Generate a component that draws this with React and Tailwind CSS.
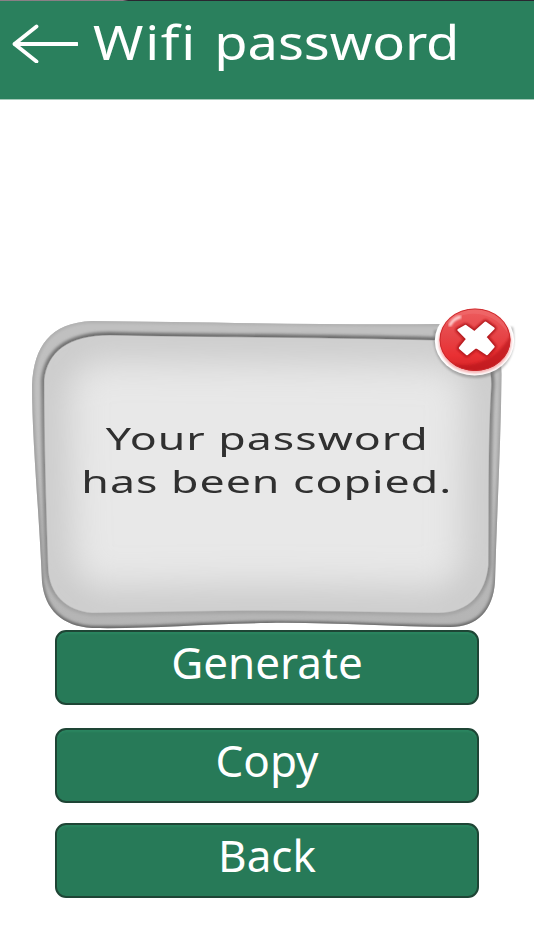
const fontStack = "font-['Noto_Sans','Open_Sans',sans-serif]"

const actions = [
  { label: 'Generate', gap: '' },
  { label: 'Copy', gap: 'mt-[23px]' },
  { label: 'Back', gap: 'mt-5' },
]

const outerPath = 'M32 385C34 346 50 323 92 321C200 322 320 325 440 324C480 325 502 335 501.500 375C501 440 497 510 495 582C493 610 478 627 450 627C390 627 330 622 267 623C200 624 150 629 92 628C62 626 45 610 42 582C39 510 32 440 32 385Z'
const innerPath = 'M44 380C47 352 68 335 110 335C200 337 310 337 434 340C474 341 492 352 491.500 385C488 440 489 500 488.500 565C486 592 470 613 438 613C360 612 280 610 220 611L92 613C66 611 49 594 48 568C46 510 44 440 44 380Z'
const crossPath = 'M458.500 330 465.500 326 474.500 332.500 485.500 322.700 493.500 328.500 485.200 337 493.500 346.800 487 354 476 346.700 467 354 460 348 467.300 339Z'

const BackArrow = () => (
  <svg width="68" height="42" viewBox="0 0 68 42" fill="none" stroke="#fff" strokeLinecap="round" strokeLinejoin="round">
    <path d="M26.500 5.500 4.500 23 26.500 40.500" strokeWidth="3.8" />
    <path d="M5 23H67" strokeWidth="4" />
  </svg>
)

/* Bevelled metal frame behind the message */
const PanelFrame = () => (
  <svg className="absolute inset-0" width="474" height="310" viewBox="30 320 474 310" fill="none">
    <defs>
      <linearGradient id="rim" x1="0" y1="320" x2="0" y2="630" gradientUnits="userSpaceOnUse">
        <stop offset="0" stopColor="#c0c0c0" />
        <stop offset="0.5" stopColor="#c0c0c0" />
        <stop offset="1" stopColor="#b4b4b4" />
      </linearGradient>
      <linearGradient id="bevel" x1="0" y1="335" x2="0" y2="613" gradientUnits="userSpaceOnUse">
        <stop offset="0" stopColor="#6c6c6c" />
        <stop offset="0.25" stopColor="#858585" />
        <stop offset="0.85" stopColor="#909090" />
        <stop offset="1" stopColor="#a6a6a6" />
      </linearGradient>
      <linearGradient id="edge" x1="0" y1="320" x2="0" y2="628" gradientUnits="userSpaceOnUse">
        <stop offset="0" stopColor="#b0b0b0" />
        <stop offset="0.8" stopColor="#8f8f8f" />
        <stop offset="1" stopColor="#606060" />
      </linearGradient>
      <filter id="soft" x="-20%" y="-20%" width="140%" height="140%">
        <feGaussianBlur stdDeviation="1.6" />
      </filter>
      <filter id="haze" x="-30%" y="-30%" width="160%" height="160%">
        <feGaussianBlur stdDeviation="22" />
      </filter>
      <clipPath id="outer"><path d={outerPath} /></clipPath>
      <clipPath id="inner"><path d={innerPath} /></clipPath>
    </defs>
    <g clipPath="url(#outer)">
      <rect x="30" y="320" width="474" height="310" fill="url(#rim)" />
      <path d={outerPath} stroke="url(#edge)" strokeWidth="4" filter="url(#soft)" />
      <path d={innerPath} stroke="url(#bevel)" strokeWidth="6" filter="url(#soft)" />
    </g>
    <g clipPath="url(#inner)">
      <rect x="30" y="320" width="474" height="310" fill="#e8e8e8" />
      <path d={innerPath} stroke="#b8b8b8" strokeWidth="30" filter="url(#haze)" />
    </g>
    <path d={innerPath} stroke="url(#bevel)" strokeWidth="0.8" opacity="0.5" />
  </svg>
)

const CloseIcon = () => (
  <svg width="90" height="76" viewBox="430 304 90 76">
    <defs>
      <linearGradient id="red" x1="0" y1="308" x2="0" y2="371" gradientUnits="userSpaceOnUse">
        <stop offset="0" stopColor="#ee5d5f" />
        <stop offset="0.45" stopColor="#e64447" />
        <stop offset="0.75" stopColor="#e93033" />
        <stop offset="1" stopColor="#d42427" />
      </linearGradient>
      <clipPath id="disc">
        <ellipse cx="475" cy="339.7" rx="35.5" ry="31.3" />
      </clipPath>
      <filter id="glint" x="-20%" y="-20%" width="140%" height="140%">
        <feGaussianBlur stdDeviation="0.8" />
      </filter>
    </defs>
    <path d="M434 330C430 360 451 378 475 378C500 378 519 359 513 327Z" fill="#777" opacity="0.5" filter="url(#glint)" />
    <ellipse cx="474.5" cy="340.8" rx="39.7" ry="34.7" fill="#fff" />
    <ellipse cx="475" cy="342" rx="36.5" ry="31.5" fill="#f5b5b6" filter="url(#glint)" />
    <ellipse cx="475" cy="339.7" rx="35.5" ry="31.3" fill="url(#red)" />
    <g clipPath="url(#disc)">
      <path d="M442 360C470 374 500 357 511 334L514 375H440Z" fill="#b9181c" opacity="0.65" filter="url(#glint)" />
      <path d="M437 335C450 311 488 304 507 332L508 304H437Z" fill="#f49090" opacity="0.22" />
      <ellipse cx="475" cy="339.7" rx="35" ry="30.8" fill="none" stroke="#c9292c" strokeWidth="1" />
    </g>
    <path d="M450 325Q453 319 460 317" stroke="#ffd5d5" strokeWidth="3" strokeLinecap="round" fill="none" filter="url(#glint)" />
    <path d={crossPath} fill="#b4191c" stroke="#b4191c" strokeWidth="6" strokeLinejoin="round" filter="url(#glint)" />
    <path d={crossPath} fill="#fff" stroke="#fff" strokeWidth="2.4" strokeLinejoin="round" />
  </svg>
)

const MessagePanel = () => (
  <section className="relative ml-[30px] mt-[220px] h-[310px] w-[474px]">
    <PanelFrame />
    <div className="relative flex flex-col items-center pt-[97px] text-[31px] leading-[43px] tracking-[0.7px] text-[#303030]">
      <p className="origin-center scale-x-[1.44] whitespace-nowrap">Your password</p>
      <p className="origin-center scale-x-[1.44] whitespace-nowrap">has been copied.</p>
    </div>
    <button aria-label="Close" className="absolute -top-4 left-[400px]">
      <CloseIcon />
    </button>
  </section>
)

const App = () => (
  <div className={`h-[950px] w-[534px] overflow-hidden bg-white ${fontStack}`}>
    <header className="h-[100px] border-b border-[#a5cab9] bg-[#2a805d]">
      <div className="h-px bg-linear-to-r from-[#8b7f86] from-[23%] to-[#292630] to-[24%]" />
      <div className="flex items-start">
        <button aria-label="Back" className="ml-[10px] mt-[20px]">
          <BackArrow />
        </button>
        <h1 className="ml-[15px] mt-[8px] origin-left scale-x-[1.13] whitespace-nowrap text-[48px] font-[450] leading-[66px] text-white">
          <span className="tracking-[1.5px]">Wifi</span> <span className="ml-[3px] tracking-[-0.1px]">password</span>
        </h1>
      </div>
    </header>

    <MessagePanel />

    <nav className="flex flex-col px-[55px]">
      {actions.map(({ label, gap }) => (
        <button
          key={label}
          className={`flex h-[75px] w-[424px] justify-center rounded-[11px] border-2 border-[#1e4535] bg-[#277a58] text-[44px] leading-[60px] text-white shadow-[inset_0_2px_2px_#2b8560] ${gap}`}
        >
          {label}
        </button>
      ))}
    </nav>
  </div>
)

export default App
